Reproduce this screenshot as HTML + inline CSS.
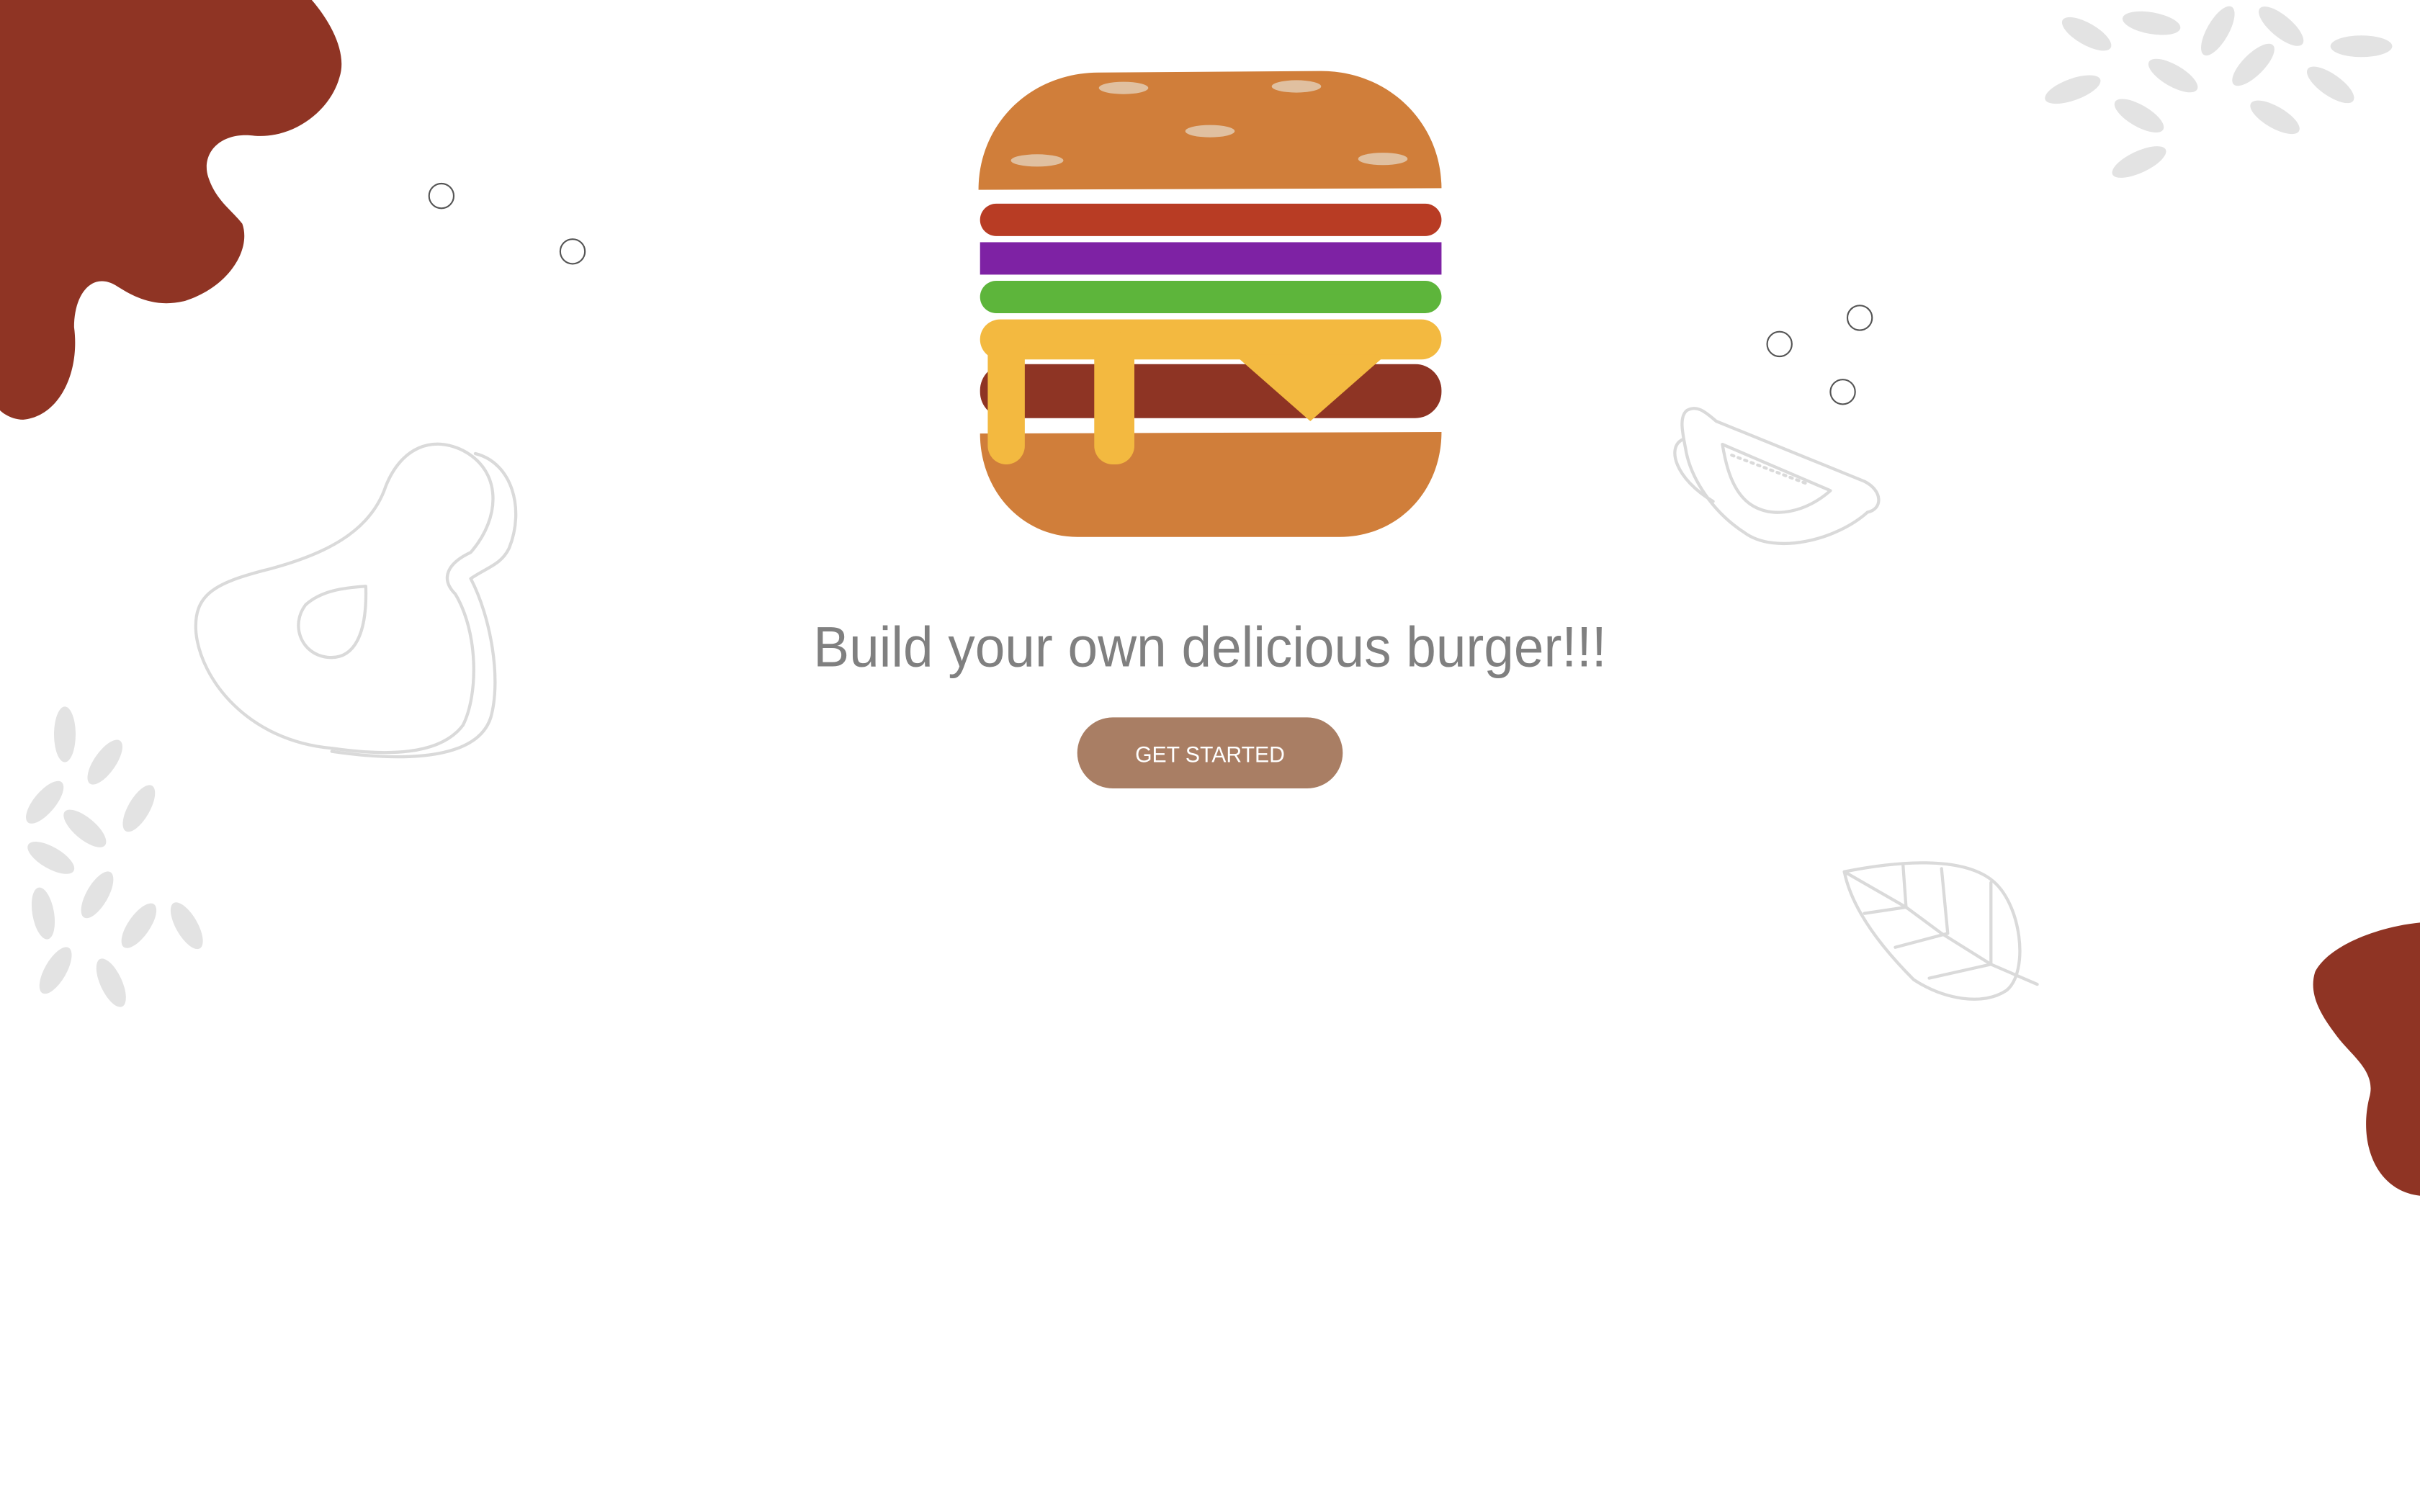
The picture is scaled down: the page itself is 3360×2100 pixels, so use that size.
<!DOCTYPE html>
<html><head><meta charset="utf-8"><style>
html,body{margin:0;padding:0;background:#fff;width:3360px;height:2100px;overflow:hidden}
svg{display:block}
</style></head><body>
<svg width="3360" height="2100" viewBox="0 0 1568 980" xmlns="http://www.w3.org/2000/svg">
<rect width="1568" height="980" fill="#fff"/>
<!-- blobs -->
<path fill="#8f3424" d="M0,0 L202,0 C215,15 225,35 220,50 C214,72 190,90 165,88 C142,85 130,100 135,115 C140,130 150,136 157,145 C163,162 148,186 120,195 C100,200 86,192 75,185 C60,176 48,190 48,212 C52,242 38,270 15,272 C6,272 0,266 0,266Z"/>
<path fill="#8f3424" d="M1568,598 C1538,601 1508,614 1500,630 C1495,646 1506,661 1516,674 C1526,686 1540,696 1535,712 C1528,742 1540,772 1568,775Z"/>
<!-- circles -->
<g fill="none" stroke="#555" stroke-width="1">
<circle cx="286" cy="127" r="8"/><circle cx="371" cy="163" r="8"/>
<circle cx="1153" cy="223" r="8"/><circle cx="1205" cy="206" r="8"/><circle cx="1194" cy="254" r="8"/>
</g>
<!-- seeds -->
<g fill="#e3e3e3">
<ellipse cx="1352" cy="22" rx="18" ry="7" transform="rotate(30 1352 22)"/>
<ellipse cx="1394" cy="15" rx="19" ry="7" transform="rotate(10 1394 15)"/>
<ellipse cx="1437" cy="20" rx="18" ry="7" transform="rotate(-60 1437 20)"/>
<ellipse cx="1478" cy="17" rx="18" ry="7" transform="rotate(40 1478 17)"/>
<ellipse cx="1530" cy="30" rx="20" ry="7"/>
<ellipse cx="1343" cy="58" rx="19" ry="7" transform="rotate(-20 1343 58)"/>
<ellipse cx="1408" cy="49" rx="18" ry="7" transform="rotate(30 1408 49)"/>
<ellipse cx="1460" cy="42" rx="18" ry="7" transform="rotate(-45 1460 42)"/>
<ellipse cx="1510" cy="55" rx="18" ry="7" transform="rotate(35 1510 55)"/>
<ellipse cx="1386" cy="75" rx="18" ry="7" transform="rotate(30 1386 75)"/>
<ellipse cx="1474" cy="76" rx="18" ry="7" transform="rotate(30 1474 76)"/>
<ellipse cx="1386" cy="105" rx="19" ry="7" transform="rotate(-25 1386 105)"/>
<ellipse cx="42" cy="476" rx="18" ry="7" transform="rotate(90 42 476)"/>
<ellipse cx="68" cy="494" rx="17" ry="7" transform="rotate(-55 68 494)"/>
<ellipse cx="29" cy="520" rx="17" ry="7" transform="rotate(-50 29 520)"/>
<ellipse cx="55" cy="537" rx="17" ry="7" transform="rotate(40 55 537)"/>
<ellipse cx="90" cy="524" rx="17" ry="7" transform="rotate(-60 90 524)"/>
<ellipse cx="33" cy="556" rx="17" ry="7" transform="rotate(30 33 556)"/>
<ellipse cx="63" cy="580" rx="17" ry="7" transform="rotate(-60 63 580)"/>
<ellipse cx="28" cy="592" rx="17" ry="7" transform="rotate(80 28 592)"/>
<ellipse cx="90" cy="600" rx="17" ry="7" transform="rotate(-55 90 600)"/>
<ellipse cx="121" cy="600" rx="17" ry="7" transform="rotate(60 121 600)"/>
<ellipse cx="36" cy="629" rx="17" ry="7" transform="rotate(-60 36 629)"/>
<ellipse cx="72" cy="637" rx="17" ry="7" transform="rotate(65 72 637)"/>
</g>
<!-- line drawings -->
<g fill="none" stroke="#dadada" stroke-width="2" stroke-linecap="round" stroke-linejoin="round">
<path d="M215,485 C160,480 130,440 127,410 C125,385 140,378 170,370 C210,360 240,345 250,315 C260,290 280,282 300,292 C325,305 325,335 305,358 C290,365 285,375 295,385 C310,410 310,450 300,470 C285,490 250,490 215,485Z"/>
<path d="M308,294 C332,300 340,330 330,355 C325,366 315,368 305,375 C318,400 325,440 318,465 C310,490 270,495 215,487"/>
<path d="M237,380 C238,410 230,428 212,426 C195,424 188,405 198,392 C208,383 222,381 237,380Z"/>
<path d="M1093,266 C1100,262 1106,268 1112,273 L1208,312 C1220,318 1220,330 1210,332 C1190,350 1150,360 1130,345 C1110,332 1095,310 1092,290 C1090,280 1088,270 1093,266Z"/>
<path d="M1090,285 C1080,290 1085,310 1110,325"/>
<path d="M1116,288 L1186,318 C1170,332 1150,336 1136,328 C1122,320 1118,300 1116,288Z"/>
<path d="M1122,295 L1172,314" stroke-dasharray="1.5 3"/>
<path d="M1195,565 C1230,558 1270,555 1290,570 C1310,585 1315,630 1300,642 C1285,652 1260,648 1240,635 C1220,615 1200,590 1195,565Z"/>
<path d="M1195,565 L1235,588 L1258,605 L1290,625 L1320,638"/>
<path d="M1233,560 L1235,588 L1208,592"/><path d="M1258,563 L1262,605 L1228,614"/><path d="M1290,572 L1290,625 L1250,634"/>
</g>
<!-- burger -->
<path fill="#d07e3a" d="M634,123 C634,80 668,47 712,47 L856,46 C900,46 934,80 934,122 Z"/>
<g fill="#e0c0a0">
<ellipse cx="728" cy="57" rx="16" ry="4"/><ellipse cx="840" cy="56" rx="16" ry="4"/>
<ellipse cx="784" cy="85" rx="16" ry="4"/><ellipse cx="672" cy="104" rx="17" ry="4"/>
<ellipse cx="896" cy="103" rx="16" ry="4"/>
</g>
<rect x="635" y="132" width="299" height="21" rx="10.5" fill="#b83c24"/>
<rect x="635" y="157" width="299" height="21" fill="#7e22a4"/>
<rect x="635" y="182" width="299" height="21" rx="10.5" fill="#5db53b"/>
<rect x="635" y="236" width="299" height="35" rx="17" fill="#8e3424"/>
<path fill="#d07e3a" d="M635,281 L934,280 C934,318 906,348 868,348 L698,348 C662,348 635,318 635,281Z"/>
<g fill="#f3b940">
<rect x="635" y="207" width="299" height="26" rx="13"/>
<rect x="640" y="215" width="24" height="86" rx="12"/>
<rect x="709" y="215" width="26" height="86" rx="12"/>
<path d="M800,230 L898,230 L849,273Z"/>
</g>
<text x="784" y="432" text-anchor="middle" font-family="Liberation Sans, sans-serif" font-size="37" fill="#808080" textLength="514" lengthAdjust="spacingAndGlyphs">Build your own delicious burger!!!</text>
<rect x="698" y="465" width="172" height="46" rx="23" fill="#a97e64"/>
<text x="784" y="494" text-anchor="middle" font-family="Liberation Sans, sans-serif" font-size="14.5" fill="#fff" textLength="97" lengthAdjust="spacingAndGlyphs">GET STARTED</text>
</svg>
</body></html>
